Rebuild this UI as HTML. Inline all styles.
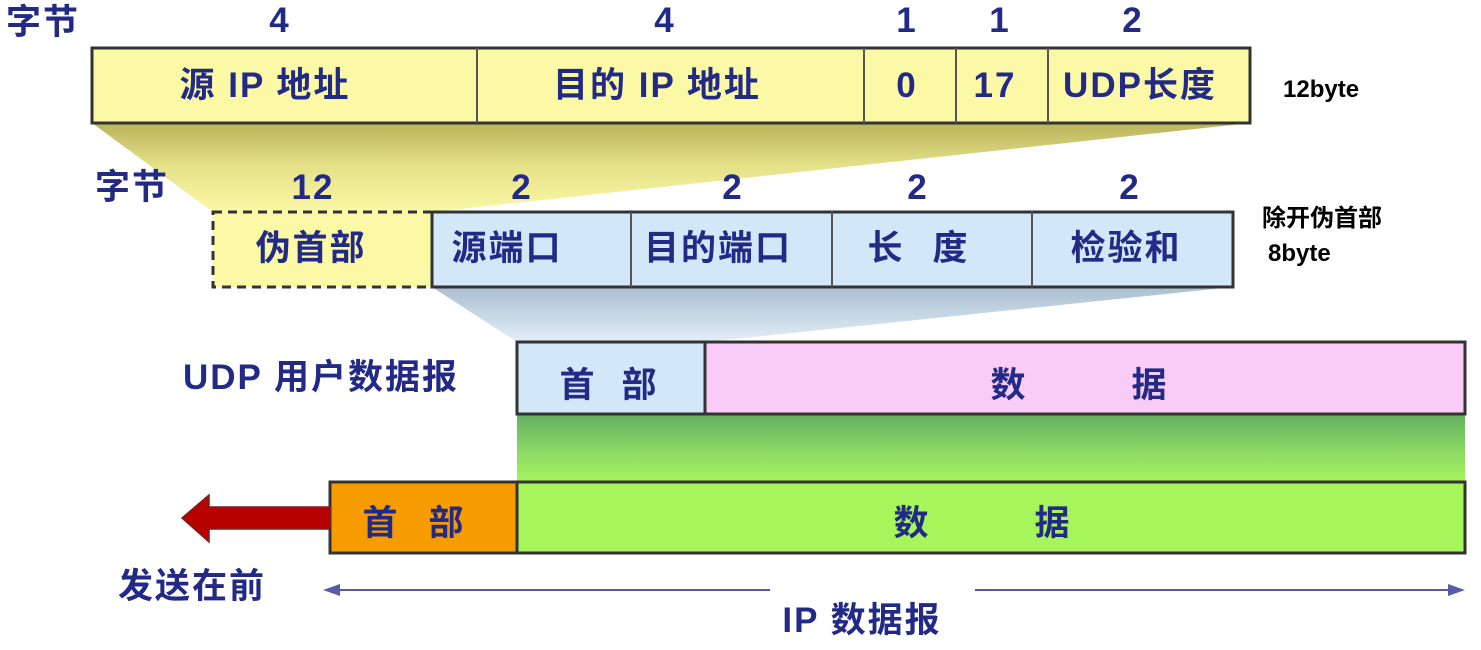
<!DOCTYPE html>
<html><head><meta charset="utf-8"><style>
html,body{margin:0;padding:0;background:#fff;width:1481px;height:650px;overflow:hidden}
svg{display:block}
.t{font-family:"Liberation Sans","Noto Sans CJK SC",sans-serif;font-weight:bold;fill:#222a86}
.k{font-family:"Liberation Sans","Noto Sans CJK SC",sans-serif;font-weight:bold;fill:#000}
</style></head><body>
<svg width="1481" height="650" viewBox="0 0 1481 650" xmlns="http://www.w3.org/2000/svg">
<defs>
<linearGradient id="yg" x1="0" y1="0" x2="0" y2="1"><stop offset="0" stop-color="#b9b45a"/><stop offset="0.5" stop-color="#e6e28a"/><stop offset="1" stop-color="#fbf8a6"/></linearGradient>
<linearGradient id="bg" x1="0" y1="0" x2="0" y2="1"><stop offset="0" stop-color="#a9bfd0"/><stop offset="1" stop-color="#e3eef8"/></linearGradient>
<linearGradient id="gg" x1="0" y1="0" x2="0" y2="1"><stop offset="0" stop-color="#62b060"/><stop offset="0.6" stop-color="#8fdc66"/><stop offset="1" stop-color="#a6f55a"/></linearGradient>
</defs>
<polygon points="92,123 1250,123 432,212 213,212" fill="url(#yg)"/>
<polygon points="432,287 1233,287 705,342 517,342" fill="url(#bg)"/>
<rect x="517" y="414" width="948" height="68" fill="url(#gg)"/>
<rect x="92" y="48" width="1158" height="75" fill="#fbf8a6" stroke="#333" stroke-width="3"/>
<g stroke="#555" stroke-width="2"><line x1="477" y1="48" x2="477" y2="123"/><line x1="864" y1="48" x2="864" y2="123"/><line x1="956" y1="48" x2="956" y2="123"/><line x1="1048" y1="48" x2="1048" y2="123"/></g>
<g class="t" font-size="35" text-anchor="middle" letter-spacing="2">
<text x="43" y="34">字节</text><text x="280" y="32">4</text><text x="665" y="32">4</text><text x="907" y="32">1</text><text x="1000" y="32">1</text><text x="1133" y="32">2</text>
<text x="265" y="97">源 IP 地址</text><text x="657" y="97">目的 IP 地址</text><text x="907" y="97">0</text><text x="995" y="97">17</text><text x="1140" y="97">UDP长度</text>
<text x="132" y="199">字节</text><text x="313" y="199">12</text><text x="522" y="199">2</text><text x="733" y="199">2</text><text x="918" y="199">2</text><text x="1130" y="199">2</text>
</g>
<rect x="213" y="212" width="219" height="75" fill="#fbf8a6" stroke="#333" stroke-width="3" stroke-dasharray="9,6"/>
<rect x="432" y="212" width="801" height="75" fill="#d2e8f8" stroke="#333" stroke-width="3"/>
<g stroke="#555" stroke-width="2"><line x1="631" y1="212" x2="631" y2="287"/><line x1="832" y1="212" x2="832" y2="287"/><line x1="1032" y1="212" x2="1032" y2="287"/></g>
<g class="t" font-size="35" text-anchor="middle" letter-spacing="2">
<text x="311" y="260">伪首部</text><text x="507" y="260">源端口</text><text x="718" y="260">目的端口</text><text x="886" y="260">长</text><text x="951" y="260">度</text><text x="1126" y="260">检验和</text>
</g>
<rect x="517" y="342" width="188" height="72" fill="#d2e8f8" stroke="#333" stroke-width="3"/>
<rect x="705" y="342" width="760" height="72" fill="#f8ccf6" stroke="#333" stroke-width="3"/>
<g class="t" font-size="35" text-anchor="middle" letter-spacing="2">
<text x="321" y="389">UDP 用户数据报</text><text x="578" y="397">首</text><text x="640" y="397">部</text><text x="1009" y="397">数</text><text x="1150" y="397">据</text>
</g>
<rect x="330" y="482" width="187" height="71" fill="#f69c00" stroke="#333" stroke-width="3"/>
<rect x="517" y="482" width="948" height="71" fill="#a6f55a" stroke="#333" stroke-width="3"/>
<polygon points="330,507 209,507 209,495 182,518 209,542 209,529 330,529" fill="#b80000" stroke="#7a2020" stroke-width="1.5"/>
<g class="t" font-size="35" text-anchor="middle" letter-spacing="2">
<text x="381" y="535">首</text><text x="447" y="535">部</text><text x="912" y="535">数</text><text x="1053" y="535">据</text>
<text x="192" y="598">发送在前</text><text x="862" y="632">IP 数据报</text>
</g>
<g stroke="#5a5aa8" stroke-width="2"><line x1="328" y1="590" x2="770" y2="590"/><line x1="975" y1="590" x2="1462" y2="590"/></g>
<polygon points="323,590 340,584 340,596" fill="#5a5aa8"/><polygon points="1465,590 1448,584 1448,596" fill="#5a5aa8"/>
<g class="k" font-size="24"><text x="1283" y="97">12byte</text><text x="1262" y="226">除开伪首部</text><text x="1268" y="261">8byte</text></g>
</svg>
</body></html>
